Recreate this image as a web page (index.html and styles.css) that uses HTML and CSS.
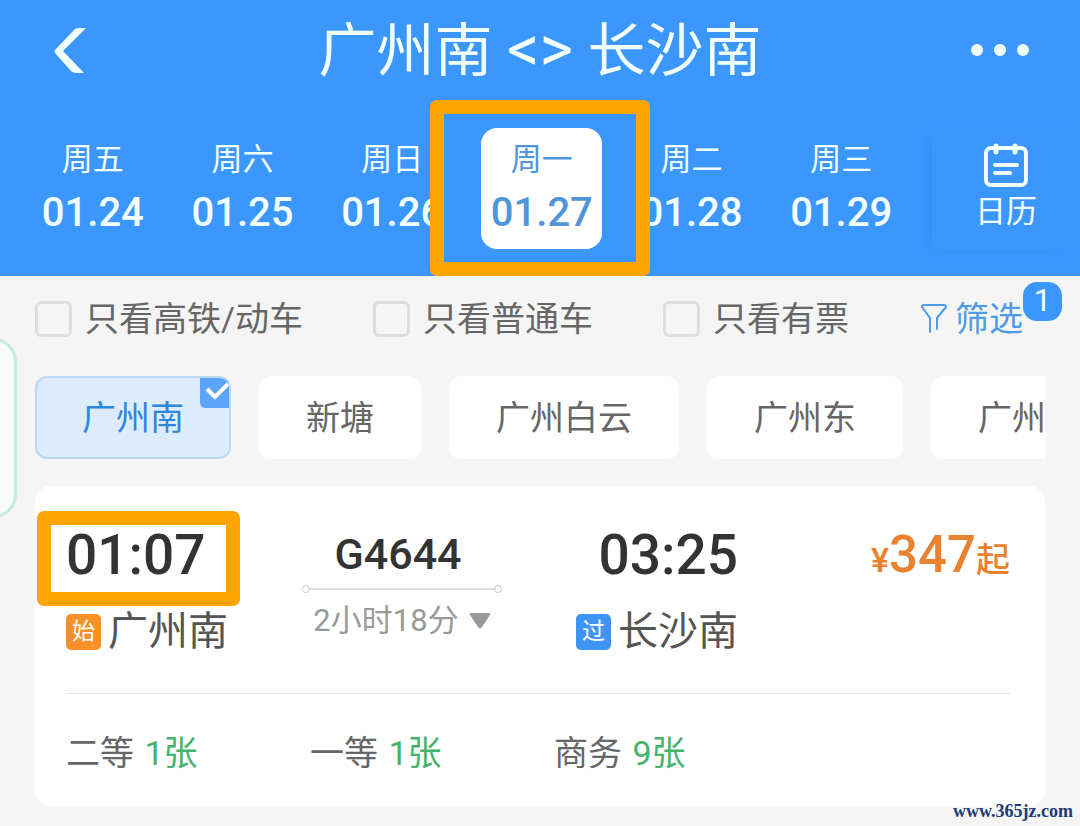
FILE: index.html
```html
<!DOCTYPE html>
<html lang="zh-CN">
<head>
<meta charset="utf-8">
<meta name="viewport" content="width=device-width, initial-scale=1">
<title>广州南 - 长沙南</title>
<link rel="stylesheet" href="styles.css">
</head>
<body>
<header class="header">
  <div class="title-bar">
    <button class="icon-button" type="button" aria-label="返回">
      <svg width="38" height="48" viewBox="0 0 38 48" fill="currentColor"><path d="M28 2h8L13 25 34 47h-8Q23 47 21 45L5 27Q4 25 5 24L24 4Q26 2 28 2Z"/></svg>
    </button>
    <h1 class="title">广州南 <span class="arrows">&lt;&gt;</span> 长沙南</h1>
    <button class="icon-button icon-button-end" type="button" aria-label="更多">
      <svg width="60" height="14" viewBox="0 0 60 14" fill="currentColor"><circle cx="7" cy="7" r="6"/><circle cx="30" cy="7" r="6"/><circle cx="53" cy="7" r="6"/></svg>
    </button>
  </div>
  <div class="date-bar">
    <div class="days">
      <button class="day" type="button"><span class="weekday">周五</span><span class="date">01.24</span></button>
      <button class="day" type="button"><span class="weekday">周六</span><span class="date">01.25</span></button>
      <button class="day" type="button"><span class="weekday">周日</span><span class="date">01.26</span></button>
      <button class="day day-active" type="button" aria-pressed="true"><span class="weekday">周一</span><span class="date">01.27</span></button>
      <button class="day" type="button"><span class="weekday">周二</span><span class="date">01.28</span></button>
      <button class="day" type="button"><span class="weekday">周三</span><span class="date">01.29</span></button>
    </div>
    <button class="calendar" type="button">
      <svg width="46" height="46" viewBox="0 0 46 46" fill="none" stroke="currentColor" stroke-width="4" stroke-linecap="round"><rect x="3" y="6" width="40" height="37" rx="5"/><path d="M13 4v6M32 4v6" stroke-width="5"/><path d="M12 23h22M12 31h15"/></svg>
      <span class="weekday">日历</span>
    </button>
  </div>
</header>
<main class="main">
  <div class="filters">
    <label class="check check-wide"><input type="checkbox">只看高铁/动车</label>
    <label class="check check-wide"><input type="checkbox">只看普通车</label>
    <label class="check"><input type="checkbox">只看有票</label>
    <button class="filter" type="button">
      <svg width="26" height="32" viewBox="0 0 26 32" fill="none" stroke="currentColor" stroke-width="2" stroke-linecap="round" stroke-linejoin="round"><path d="M9 29V15L1 4Q1 2 3 2H23Q25 2 25 4L16 15v11"/></svg>
      <span>筛选</span>
      <span class="count">1</span>
    </button>
  </div>
  <div class="stations">
    <button class="chip chip-active" type="button" aria-pressed="true">广州南
      <svg class="tick" width="29" height="30" viewBox="0 0 29 30"><path d="M0 0H19Q29 0 29 10V30H6Q0 30 0 24Z" fill="#5aa5f8"/><path d="M7 11 15 19 28 6" fill="none" stroke="#fff" stroke-width="4"/></svg>
    </button>
    <button class="chip" type="button">新塘</button>
    <button class="chip" type="button">广州白云</button>
    <button class="chip" type="button">广州东</button>
    <button class="chip" type="button">广州</button>
  </div>
  <article class="train">
    <div class="trip">
      <div class="stop">
        <time class="time time-marked">01:07</time>
        <div class="station"><span class="tag tag-start">始</span>广州南</div>
      </div>
      <div class="service">
        <strong class="number">G4644</strong>
        <div class="route-line"></div>
        <button class="duration" type="button">2小时18分
          <svg width="22" height="16" viewBox="0 0 22 16" fill="currentColor"><path d="M2 0h18q2 0 1 2L13 14q-2 3-4 0L1 2Q0 0 2 0Z"/></svg>
        </button>
      </div>
      <div class="stop stop-end">
        <time class="time">03:25</time>
        <div class="station"><span class="tag tag-pass">过</span>长沙南</div>
      </div>
      <div class="price"><span class="currency">¥</span>347<span class="from">起</span></div>
    </div>
    <ul class="seats">
      <li>二等 <span class="left">1张</span></li>
      <li>一等 <span class="left">1张</span></li>
      <li>商务 <span class="left">9张</span></li>
    </ul>
  </article>
</main>
<div class="side-tab"></div>
<a class="site" href="#">www.365jz.com</a>
</body>
</html>
```
FILE: styles.css
```css
* {
  box-sizing: border-box;
}

body {
  position: relative;
  margin: 0;
  min-height: 100vh;
  overflow-x: hidden;
  background: #f5f5f5;
  color: #666;
  font-family: Roboto, "Noto Sans CJK SC", sans-serif;
  font-size: 34px;
}

button {
  margin: 0;
  padding: 0;
  border: 0;
  background: none;
  color: inherit;
  font: inherit;
  white-space: nowrap;
}

svg {
  display: block;
}

/* Header */

.header {
  padding-bottom: 27px;
  background: #3c97fd;
  color: #f2ffff;
}

.title-bar {
  display: grid;
  grid-template-columns: 1fr auto 1fr;
  align-items: center;
  height: 100px;
  padding: 0 50px;
}

.title {
  margin: 0;
  font-size: 58px;
  font-weight: 400;
  line-height: 64px;
}

.arrows {
  font-size: 64px;
}

.icon-button {
  width: max-content;
}

.icon-button-end {
  justify-self: end;
}

.date-bar {
  display: flex;
  margin-top: 28px;
}

.days {
  display: grid;
  flex: 1;
  grid-template-columns: repeat(6, 1fr);
  justify-items: center;
  padding: 0 16px 0 18px;
}

.day {
  display: flex;
  flex-direction: column;
  align-items: center;
  gap: 5px;
  width: 121px;
  height: 121px;
  padding-top: 10px;
  border-radius: 16px;
}

.weekday {
  font-size: 31px;
  line-height: 44px;
}

.date {
  font-size: 40px;
  font-weight: 500;
  line-height: 52px;
}

.day-active {
  position: relative;
  background: #fff;
  color: #4f95d8;
}

.day-active::after {
  content: "";
  position: absolute;
  inset: -28px -48px -27px -51px;
  border: 14px solid #ffa503;
  border-radius: 7px;
}

.calendar {
  display: flex;
  flex-direction: column;
  align-items: center;
  gap: 2px;
  width: 148px;
  padding-top: 14px;
  box-shadow: -9px 4px 14px -8px #3289ec;
}

/* Filters */

.main {
  padding: 25px 35px 20px;
}

.filters {
  display: flex;
  align-items: center;
  line-height: 36px;
}

.check {
  display: flex;
  align-items: center;
  gap: 13px;
  white-space: nowrap;
}

.check-wide {
  margin-right: 70px;
}

.check input {
  appearance: none;
  width: 37px;
  height: 36px;
  margin: 0;
  border: 3px solid #dedede;
  border-radius: 6px;
}

.filter {
  position: relative;
  display: flex;
  align-items: center;
  gap: 8px;
  margin-left: auto;
  margin-right: 22px;
  color: #4f9be8;
}

.count {
  position: absolute;
  left: 100%;
  bottom: 16px;
  width: 39px;
  height: 39px;
  border-radius: 14px;
  background: #3c97fd;
  color: #f2ffff;
  font-size: 31px;
  line-height: 38px;
}

.stations {
  display: flex;
  gap: 28px;
  margin-top: 39px;
  overflow: hidden;
}

.chip {
  position: relative;
  flex: none;
  height: 83px;
  padding: 0 47px 4px;
  border-radius: 12px;
  background: #fff;
}

.chip-active {
  padding: 0 45px 4px;
  border: 2px solid #bcd8f2;
  background: #dcecfc;
  color: #2e87de;
}

.tick {
  position: absolute;
  top: 0;
  right: 0;
}

/* Train card */

.train {
  margin-top: 27px;
  padding: 0 35px 0 31px;
  border-radius: 16px;
  background: #fff;
}

.trip {
  display: flex;
  gap: 74px;
  padding: 37px 0 41px;
  border-bottom: 1px solid #e8e8e8;
}

.stop {
  display: flex;
  flex-direction: column;
  align-items: flex-start;
  gap: 25px;
}

.stop-end {
  align-items: flex-end;
}

.time {
  position: relative;
  color: #333;
  font-size: 55px;
  font-weight: 500;
  line-height: 64px;
}

.time-marked::after {
  content: "";
  position: absolute;
  inset: -12px -34px -19px -29px;
  border: 14px solid #ffa503;
  border-radius: 7px;
}

.station {
  display: flex;
  align-items: center;
  gap: 7px;
  color: #555;
  font-size: 40px;
  line-height: 40px;
  white-space: nowrap;
}

.tag {
  width: 35px;
  height: 36px;
  border-radius: 5px;
  color: #fff;
  font-size: 23px;
  line-height: 36px;
  text-align: center;
}

.tag-start {
  background: #f79029;
}

.tag-pass {
  background: #3f95f5;
}

.service {
  display: flex;
  flex-direction: column;
  align-items: center;
  width: 200px;
}

.number {
  padding-right: 8px;
  color: #333;
  font-size: 43px;
  font-weight: 500;
  line-height: 62px;
}

.route-line {
  display: flex;
  align-items: center;
  justify-content: space-between;
  width: 100%;
  background: linear-gradient(#dcdcdc, #dcdcdc) center / calc(100% - 12px) 2px no-repeat;
}

.route-line::before,
.route-line::after {
  content: "";
  width: 6px;
  height: 6px;
  border: 1px solid #ccc;
  border-radius: 50%;
}

.duration {
  display: flex;
  align-items: center;
  gap: 10px;
  margin-top: 8px;
  color: #999;
  font-size: 31px;
  line-height: 40px;
}

.price {
  margin-left: auto;
  color: #e98230;
  font-size: 51px;
  font-weight: 500;
  line-height: 64px;
  white-space: nowrap;
}

.currency,
.from {
  font-size: 34px;
}

.seats {
  display: grid;
  grid-template-columns: repeat(4, 1fr);
  gap: 32px;
  margin: 0;
  padding: 37px 0 31px;
  list-style: none;
  line-height: 44px;
  white-space: nowrap;
}

.left {
  margin-left: 2px;
  color: #45b36b;
}

/* Overlays */

.side-tab {
  position: absolute;
  top: 338px;
  left: -30px;
  width: 47px;
  height: 180px;
  border: 3px solid #c6eaea;
  border-radius: 24px;
  background: #f9fafa;
}

.site {
  position: absolute;
  right: 7px;
  bottom: 4px;
  color: #1b3b78;
  font-family: "Liberation Serif", serif;
  font-size: 18px;
  font-weight: 700;
  line-height: 22px;
  text-decoration: none;
}
```
